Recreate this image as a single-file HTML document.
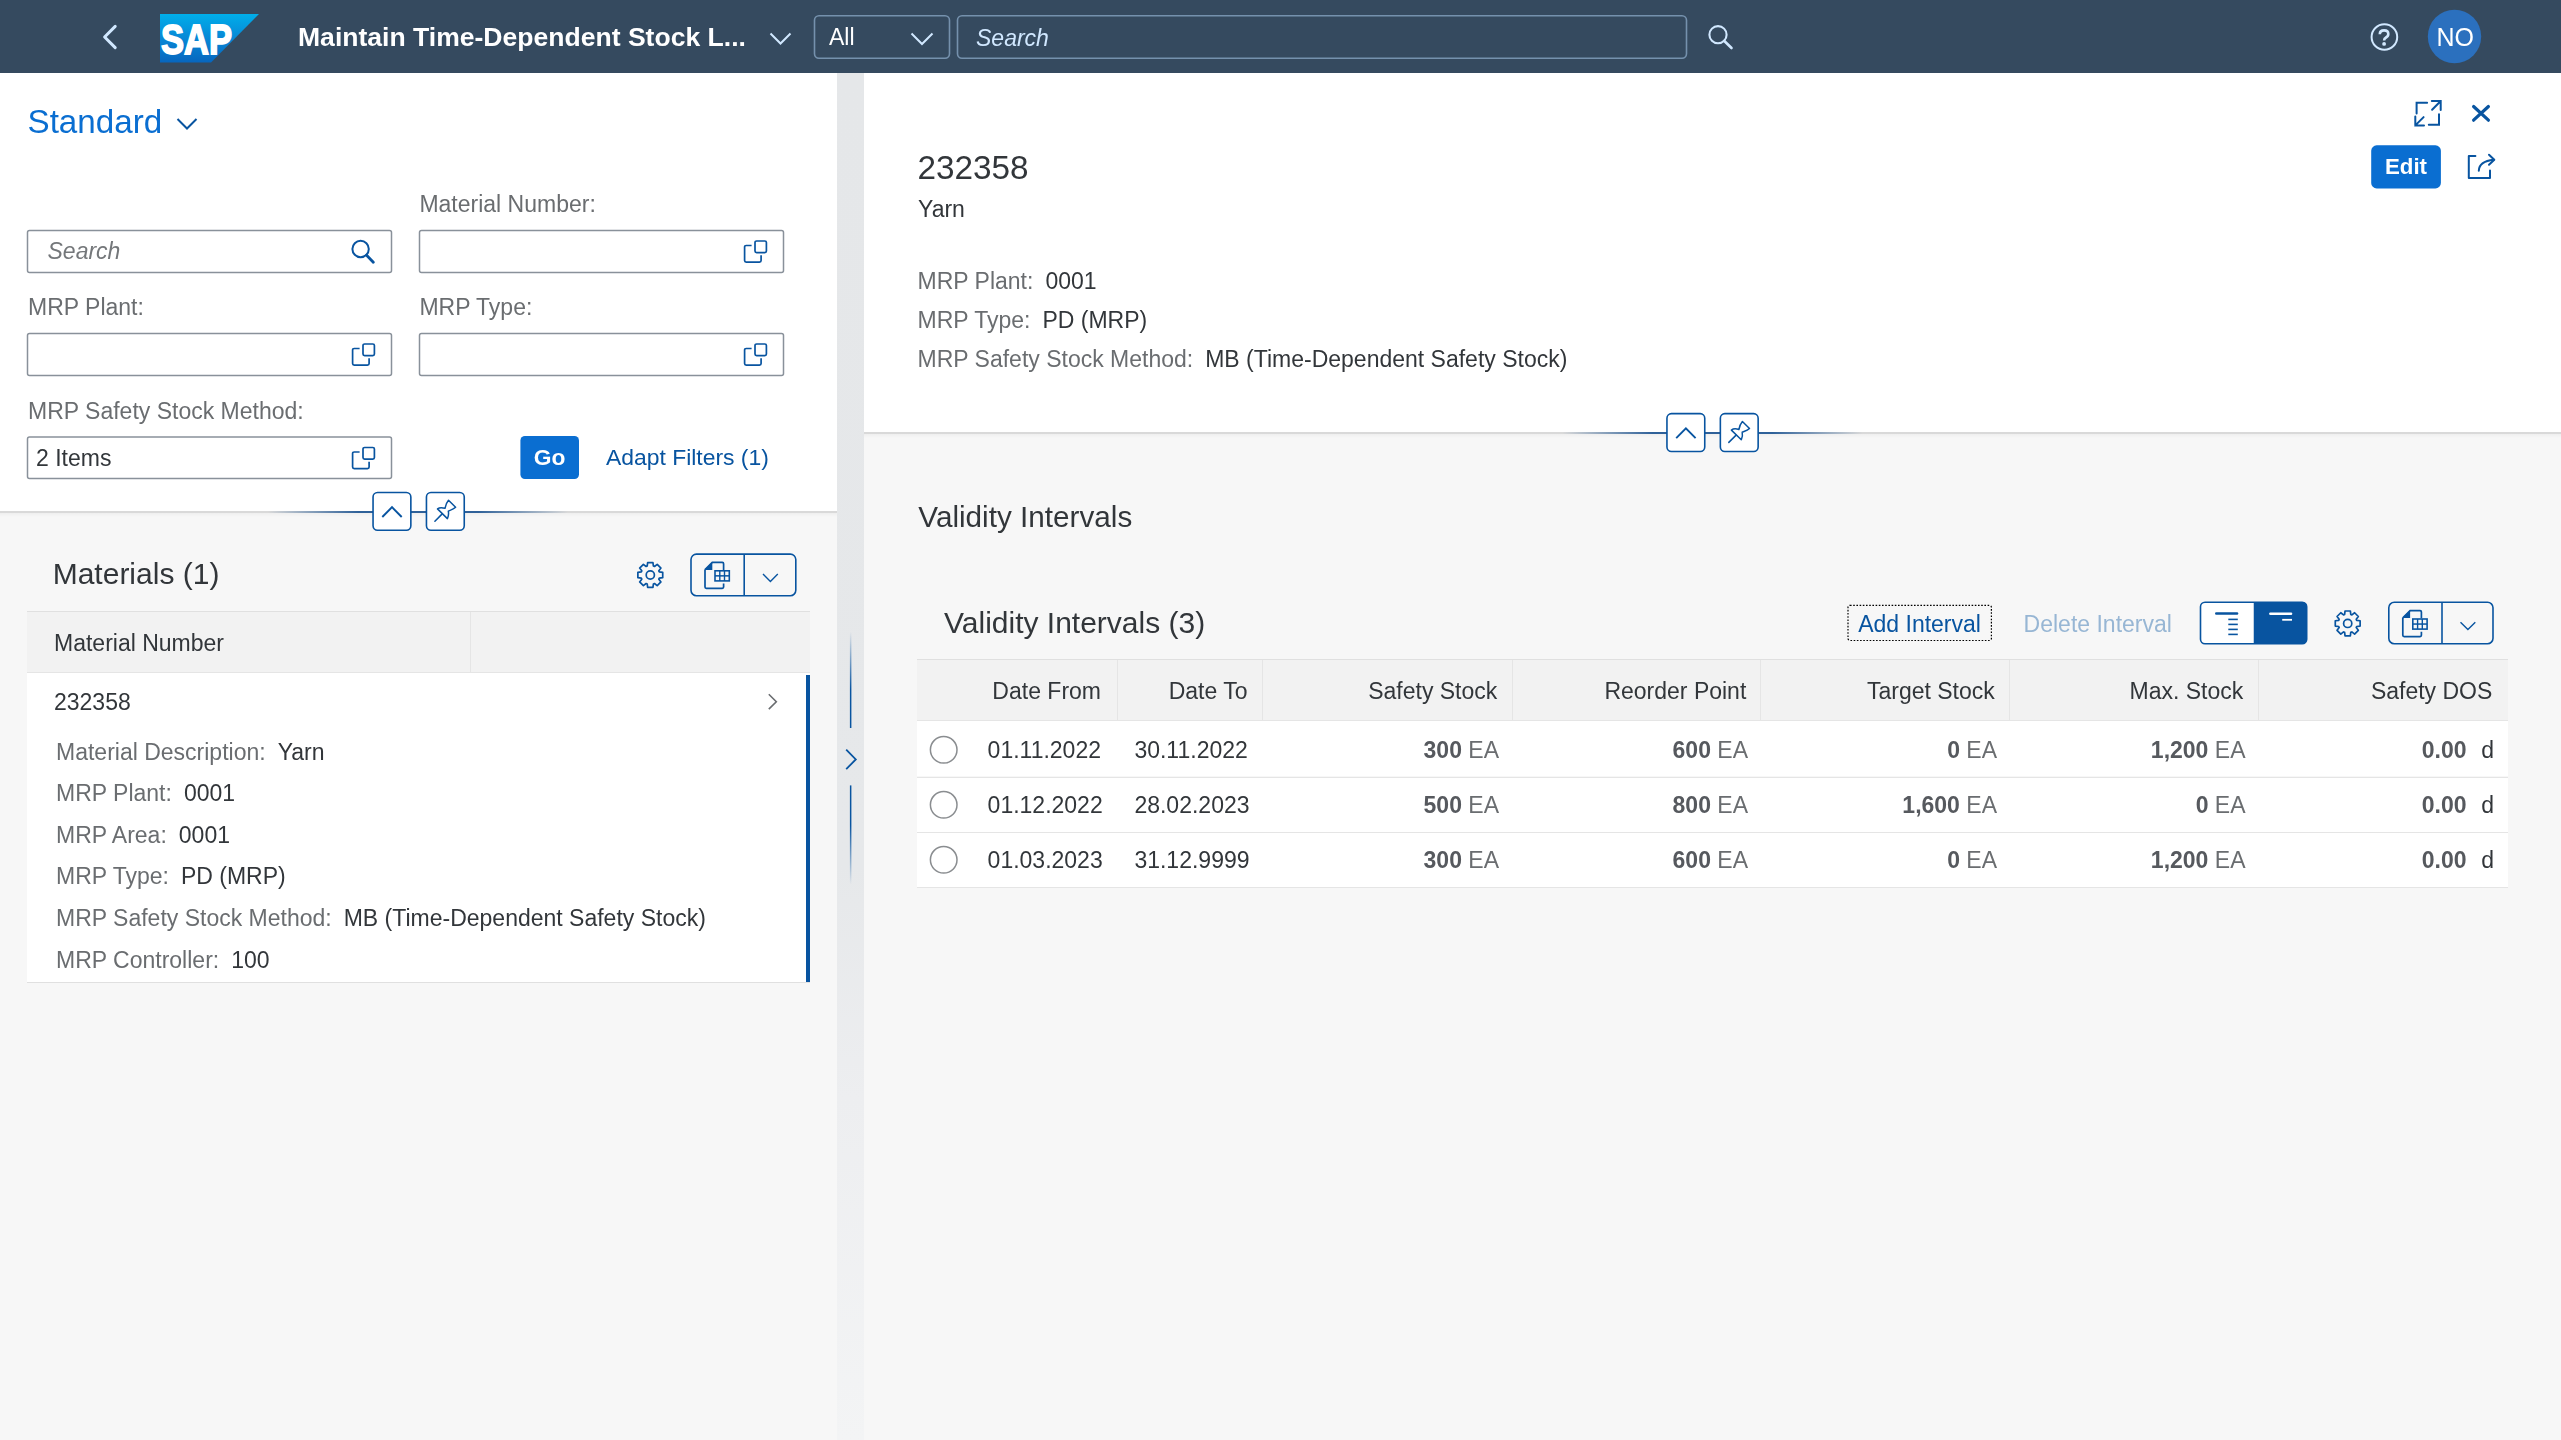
<!DOCTYPE html>
<html><head><meta charset="utf-8"><title>Maintain Time-Dependent Stock Levels</title>
<style>
html,body{margin:0;padding:0;width:2561px;height:1440px;overflow:hidden;background:#f7f7f7;font-family:"Liberation Sans", sans-serif;}
.t{position:absolute;white-space:nowrap;line-height:0;}
svg{position:absolute;left:0;top:0;}
</style></head><body>
<div style="position:absolute;left:0px;top:0px;width:2561px;height:73px;background:#354a5f"></div><div style="position:absolute;left:0px;top:73px;width:837px;height:438px;background:#fff"></div><div style="position:absolute;left:0px;top:511px;width:837px;height:2px;background:#d9d9d9"></div><div style="position:absolute;left:0px;top:513px;width:837px;height:4px;background:linear-gradient(rgba(0,0,0,0.035),rgba(0,0,0,0))"></div><div style="position:absolute;left:837px;top:73px;width:27px;height:1367px;background:linear-gradient(#e5e7e9 0%,#e6e8ea 58%,#edeef0 75%,#f3f4f5 100%)"></div><div style="position:absolute;left:864px;top:73px;width:1697px;height:360px;background:#fff"></div><div style="position:absolute;left:864px;top:432px;width:1697px;height:2px;background:#d9d9d9"></div><div style="position:absolute;left:864px;top:434px;width:1697px;height:4px;background:linear-gradient(rgba(0,0,0,0.035),rgba(0,0,0,0))"></div><div style="position:absolute;left:27px;top:611px;width:783px;height:1px;background:#e0e0e0"></div><div style="position:absolute;left:27px;top:612px;width:783px;height:61px;background:#f2f2f2"></div><div style="position:absolute;left:470px;top:612px;width:1px;height:61px;background:#e5e5e5"></div><div style="position:absolute;left:27px;top:672px;width:783px;height:1px;background:#e5e5e5"></div><div style="position:absolute;left:27px;top:673px;width:783px;height:309px;background:#fff"></div><div style="position:absolute;left:27px;top:982px;width:783px;height:1px;background:#e0e0e0"></div><div style="position:absolute;left:806px;top:675px;width:4px;height:307px;background:#0854a0"></div><div style="position:absolute;left:917px;top:659px;width:1591px;height:1px;background:#e0e0e0"></div><div style="position:absolute;left:917px;top:660px;width:1591px;height:61px;background:#f2f2f2"></div><div style="position:absolute;left:1116.5px;top:660px;width:1px;height:61px;background:#e5e5e5"></div><div style="position:absolute;left:1262px;top:660px;width:1px;height:61px;background:#e5e5e5"></div><div style="position:absolute;left:1511.5px;top:660px;width:1px;height:61px;background:#e5e5e5"></div><div style="position:absolute;left:1760px;top:660px;width:1px;height:61px;background:#e5e5e5"></div><div style="position:absolute;left:2009px;top:660px;width:1px;height:61px;background:#e5e5e5"></div><div style="position:absolute;left:2257.5px;top:660px;width:1px;height:61px;background:#e5e5e5"></div><div style="position:absolute;left:917px;top:720px;width:1591px;height:1px;background:#e5e5e5"></div><div style="position:absolute;left:917px;top:721px;width:1591px;height:55px;background:#fff"></div><div style="position:absolute;left:917px;top:777px;width:1591px;height:55px;background:#fff"></div><div style="position:absolute;left:917px;top:832px;width:1591px;height:55px;background:#fff"></div><div style="position:absolute;left:917px;top:777px;width:1591px;height:1px;background:#e5e5e5"></div><div style="position:absolute;left:917px;top:832px;width:1591px;height:1px;background:#e5e5e5"></div><div style="position:absolute;left:917px;top:887px;width:1591px;height:1px;background:#e5e5e5"></div>
<svg width="2561" height="1440" viewBox="0 0 2561 1440">
<polyline points="115.2,26.4 104.6,37 115.2,47.6" fill="none" stroke="#d1e8ff" stroke-width="3" stroke-linecap="round" stroke-linejoin="round"/><defs><linearGradient id="sapg" x1="0" y1="0" x2="0" y2="1"><stop offset="0" stop-color="#00aeea"/><stop offset="0.5" stop-color="#0888d6"/><stop offset="1" stop-color="#0766be"/></linearGradient></defs><polygon points="160,14 259,14 211,62.5 160,62.5" fill="url(#sapg)"/><text x="161" y="53.8" font-family="Liberation Sans" font-weight="700" font-size="42" fill="#fff" stroke="#fff" stroke-width="1.8" textLength="71" lengthAdjust="spacingAndGlyphs">SAP</text><polyline points="770.5,33.5 780.5,43.5 790.5,33.5" fill="none" stroke="#d1e8ff" stroke-width="2"/><rect x="814.5" y="15.75" width="135" height="42.5" rx="4.5" fill="none" stroke="#7591ad" stroke-width="1.6"/><polyline points="911.5,33.5 922,44 932.5,33.5" fill="none" stroke="#d1e8ff" stroke-width="2"/><rect x="957.5" y="15.75" width="729" height="42.5" rx="4.5" fill="none" stroke="#7591ad" stroke-width="1.6"/><circle cx="1718" cy="34.7" r="8.6" fill="none" stroke="#d1e8ff" stroke-width="2.1"/><line x1="1724.3" y1="41" x2="1731.5" y2="48" stroke="#d1e8ff" stroke-width="2.6" stroke-linecap="round"/><circle cx="2384.4" cy="37" r="12.8" fill="none" stroke="#d1e8ff" stroke-width="2"/><path d="M2379.8 34.2 Q2379.8 30.4 2384.1 30.4 Q2388.3 30.4 2388.3 34 Q2388.3 36.3 2386 37.5 Q2384.1 38.5 2384.1 40.6" fill="none" stroke="#d1e8ff" stroke-width="2.6" stroke-linecap="butt"/><circle cx="2384.1" cy="43.9" r="1.9" fill="#d1e8ff"/><circle cx="2454.5" cy="36.5" r="26.7" fill="#2b70be"/><polyline points="177.5,119 187,128.5 196.5,119" fill="none" stroke="#0854a0" stroke-width="2"/><rect x="27.5" y="230.5" width="364" height="42" rx="2" fill="#fff" stroke="#89919a" stroke-width="1.5"/><circle cx="360.6" cy="249" r="8.2" fill="none" stroke="#0854a0" stroke-width="2"/><line x1="366.6" y1="255.3" x2="373.3" y2="262.2" stroke="#0854a0" stroke-width="2.8" stroke-linecap="round"/><rect x="419.5" y="230.5" width="364" height="42" rx="2" fill="#fff" stroke="#89919a" stroke-width="1.5"/><g transform="translate(743.6,240)" fill="none" stroke="#0854a0" stroke-width="1.7"><rect x="11.4" y="1" width="11.4" height="11.6" rx="1.6"/><path d="M8 5.5 H2.6 Q1 5.5 1 7.1 V20.5 Q1 22.1 2.6 22.1 H15.9 Q17.5 22.1 17.5 20.5 V15.3"/></g><rect x="27.5" y="333.5" width="364" height="42" rx="2" fill="#fff" stroke="#89919a" stroke-width="1.5"/><g transform="translate(351.6,343)" fill="none" stroke="#0854a0" stroke-width="1.7"><rect x="11.4" y="1" width="11.4" height="11.6" rx="1.6"/><path d="M8 5.5 H2.6 Q1 5.5 1 7.1 V20.5 Q1 22.1 2.6 22.1 H15.9 Q17.5 22.1 17.5 20.5 V15.3"/></g><rect x="419.5" y="333.5" width="364" height="42" rx="2" fill="#fff" stroke="#89919a" stroke-width="1.5"/><g transform="translate(743.6,343)" fill="none" stroke="#0854a0" stroke-width="1.7"><rect x="11.4" y="1" width="11.4" height="11.6" rx="1.6"/><path d="M8 5.5 H2.6 Q1 5.5 1 7.1 V20.5 Q1 22.1 2.6 22.1 H15.9 Q17.5 22.1 17.5 20.5 V15.3"/></g><rect x="27.5" y="437.0" width="364" height="41.5" rx="2" fill="#fff" stroke="#89919a" stroke-width="1.5"/><g transform="translate(351.6,446.5)" fill="none" stroke="#0854a0" stroke-width="1.7"><rect x="11.4" y="1" width="11.4" height="11.6" rx="1.6"/><path d="M8 5.5 H2.6 Q1 5.5 1 7.1 V20.5 Q1 22.1 2.6 22.1 H15.9 Q17.5 22.1 17.5 20.5 V15.3"/></g><rect x="520.4" y="436" width="58.6" height="43" rx="4.5" fill="#0a6ed1"/><defs><linearGradient id="cl418" x1="0" x2="1" y1="0" y2="0"><stop offset="0" stop-color="#2f6199" stop-opacity="0"/><stop offset="0.3" stop-color="#2f6199" stop-opacity="1"/><stop offset="0.7" stop-color="#2f6199" stop-opacity="1"/><stop offset="1" stop-color="#2f6199" stop-opacity="0"/></linearGradient></defs><rect x="268" y="511" width="300" height="2" fill="url(#cl418)"/><rect x="373.05" y="492.45" width="37.8" height="37.8" rx="4.5" fill="#fff" stroke="#0854a0" stroke-width="1.6"/><polyline points="382.3,517.0 392.0,507.2 401.7,517.0" fill="none" stroke="#0854a0" stroke-width="1.9"/><rect x="426.45" y="492.45" width="37.8" height="37.8" rx="4.5" fill="#fff" stroke="#0854a0" stroke-width="1.6"/><g transform="translate(425.7,491.7)" fill="none" stroke="#0854a0" stroke-width="1.5" stroke-linejoin="round" stroke-linecap="round"><path d="M9.2 29.5 L16.5 22.2"/><path d="M11.8 17.2 C13.8 15.6 16.8 15.8 19.3 16.6 C19.9 13.6 21 10.6 22.8 8.6 L29.9 15.6 C28 17.4 25 18.4 22.6 19.4 C23.2 22 22.6 24.8 21.7 26.9 Z"/></g><polygon points="659.29,571.92 662.72,572.35 662.72,577.65 659.29,578.08 658.83,579.18 660.95,581.91 657.21,585.65 654.48,583.53 653.38,583.99 652.95,587.42 647.65,587.42 647.22,583.99 646.12,583.53 643.39,585.65 639.65,581.91 641.77,579.18 641.31,578.08 637.88,577.65 637.88,572.35 641.31,571.92 641.77,570.82 639.65,568.09 643.39,564.35 646.12,566.47 647.22,566.01 647.65,562.58 652.95,562.58 653.38,566.01 654.48,566.47 657.21,564.35 660.95,568.09 658.83,570.82" fill="none" stroke="#0854a0" stroke-width="1.7" stroke-linejoin="round"/><circle cx="650.3" cy="575" r="4.1" fill="none" stroke="#0854a0" stroke-width="1.7"/><rect x="691.0" y="554.0999999999999" width="104.79999999999998" height="41.70000000000007" rx="5.5" fill="none" stroke="#0854a0" stroke-width="1.6"/><line x1="744.2" y1="554.3" x2="744.2" y2="595.6" stroke="#0854a0" stroke-width="1.6"/><g transform="translate(704.0,561.5999999999999)"><path d="M1 8 V25.5 Q1 26.8 2.3 26.8 H18.3 Q19.6 26.8 19.6 25.5 V22" fill="none" stroke="#0854a0" stroke-width="1.7"/><path d="M1 8 L8.3 0.8 H18.3 Q19.6 0.8 19.6 2.1 V8.5" fill="none" stroke="#0854a0" stroke-width="1.7"/><path d="M0.5 8.3 L8.3 0.4 V8.3 Z" fill="#0854a0"/><rect x="10.2" y="8.4" width="15.9" height="11.7" fill="#0854a0"/><rect x="11.8" y="10" width="3.3" height="3.5" fill="#f7f7f7"/><rect x="16.5" y="10" width="3.3" height="3.5" fill="#f7f7f7"/><rect x="21.2" y="10" width="3.3" height="3.5" fill="#f7f7f7"/><rect x="11.8" y="15" width="3.3" height="3.5" fill="#f7f7f7"/><rect x="16.5" y="15" width="3.3" height="3.5" fill="#f7f7f7"/><rect x="21.2" y="15" width="3.3" height="3.5" fill="#f7f7f7"/></g><polyline points="763.0000000000001,574.05 770.4000000000001,581.45 777.8000000000001,574.05" fill="none" stroke="#0854a0" stroke-width="1.4"/><polyline points="768.8,694.3 776.3,701.7 768.8,709.1" fill="none" stroke="#6a6d70" stroke-width="1.6"/><defs><linearGradient id="dvu" x1="0" x2="0" y1="0" y2="1"><stop offset="0" stop-color="#0854a0" stop-opacity="0"/><stop offset="0.6" stop-color="#0854a0" stop-opacity="1"/></linearGradient><linearGradient id="dvd" x1="0" x2="0" y1="0" y2="1"><stop offset="0.4" stop-color="#0854a0" stop-opacity="1"/><stop offset="1" stop-color="#0854a0" stop-opacity="0"/></linearGradient></defs><rect x="849.9" y="631.7" width="1.5" height="96.3" fill="url(#dvu)"/><rect x="849.9" y="785.4" width="1.5" height="99.2" fill="url(#dvd)"/><polyline points="846.2,749.6 855.8,759.4 846.2,769.2" fill="none" stroke="#0854a0" stroke-width="1.8"/><g transform="translate(2414.3,99.8)" fill="none" stroke="#0854a0" stroke-width="2" stroke-linecap="round"><path d="M12.8 2.9 H2.3 V13.6"/><path d="M17.8 10 L26.2 1.4 M17.5 1.2 H26.4 V10.3"/><path d="M24.7 14.4 V25 H14.5"/><path d="M9.3 17.3 L1 25.6 M1 16.8 V25.8 H9.7"/></g><path d="M2473.6 106.5 L2488.4 120.2 M2488.4 106.5 L2473.6 120.2" stroke="#0854a0" stroke-width="3.2" stroke-linecap="round"/><rect x="2371.2" y="145.3" width="69.7" height="43.1" rx="5.5" fill="#0a6ed1"/><g transform="translate(2467.8,153.7)" fill="none" stroke="#0854a0" stroke-width="2" stroke-linecap="round" stroke-linejoin="round"><path d="M7.6 2.2 H1 V24.3 H22.2 V16.8"/><path d="M11 17 Q11.3 7.5 26 6"/><path d="M21.2 1 L26.5 6.1 L21.2 11"/></g><defs><linearGradient id="cl1712" x1="0" x2="1" y1="0" y2="0"><stop offset="0" stop-color="#2f6199" stop-opacity="0"/><stop offset="0.3" stop-color="#2f6199" stop-opacity="1"/><stop offset="0.7" stop-color="#2f6199" stop-opacity="1"/><stop offset="1" stop-color="#2f6199" stop-opacity="0"/></linearGradient></defs><rect x="1562.5" y="432" width="300" height="2" fill="url(#cl1712)"/><rect x="1666.95" y="413.65" width="37.8" height="37.8" rx="4.5" fill="#fff" stroke="#0854a0" stroke-width="1.6"/><polyline points="1676.2,438.2 1685.9,428.4 1695.6000000000001,438.2" fill="none" stroke="#0854a0" stroke-width="1.9"/><rect x="1720.3500000000001" y="413.65" width="37.8" height="37.8" rx="4.5" fill="#fff" stroke="#0854a0" stroke-width="1.6"/><g transform="translate(1719.6000000000001,412.9)" fill="none" stroke="#0854a0" stroke-width="1.5" stroke-linejoin="round" stroke-linecap="round"><path d="M9.2 29.5 L16.5 22.2"/><path d="M11.8 17.2 C13.8 15.6 16.8 15.8 19.3 16.6 C19.9 13.6 21 10.6 22.8 8.6 L29.9 15.6 C28 17.4 25 18.4 22.6 19.4 C23.2 22 22.6 24.8 21.7 26.9 Z"/></g><rect x="1848" y="605.3" width="143.4" height="35.2" rx="2" fill="none" stroke="#000" stroke-width="1.2" stroke-dasharray="1.6,1.6"/><path d="M2253.5 602.3 H2303 Q2306.7 602.3 2306.7 606 V640 Q2306.7 643.8 2303 643.8 H2253.5 Z" fill="#0854a0"/><path d="M2253.5 602.3 H2205 Q2200.5 602.3 2200.5 606.8 V639.3 Q2200.5 643.8 2205 643.8 H2253.5 Z" fill="#fff"/><rect x="2200.5" y="602.3" width="106.2" height="41.5" rx="4.5" fill="none" stroke="#0854a0" stroke-width="1.6"/><path d="M2216.3 613.5 H2237" stroke="#0854a0" stroke-width="2.6" stroke-linecap="round"/><path d="M2228.3 619.4 H2237.8" stroke="#0854a0" stroke-width="1.6"/><path d="M2228.3 624.4 H2237.8" stroke="#0854a0" stroke-width="1.6"/><path d="M2228.3 629.4 H2237.8" stroke="#0854a0" stroke-width="1.6"/><path d="M2228.3 634.4 H2237.8" stroke="#0854a0" stroke-width="1.6"/><path d="M2270.4 613.7 H2291" stroke="#fff" stroke-width="2.6" stroke-linecap="round"/><path d="M2282.2 619.8 H2292" stroke="#fff" stroke-width="1.8"/><polygon points="2356.69,620.32 2360.12,620.75 2360.12,626.05 2356.69,626.48 2356.23,627.58 2358.35,630.31 2354.61,634.05 2351.88,631.93 2350.78,632.39 2350.35,635.82 2345.05,635.82 2344.62,632.39 2343.52,631.93 2340.79,634.05 2337.05,630.31 2339.17,627.58 2338.71,626.48 2335.28,626.05 2335.28,620.75 2338.71,620.32 2339.17,619.22 2337.05,616.49 2340.79,612.75 2343.52,614.87 2344.62,614.41 2345.05,610.98 2350.35,610.98 2350.78,614.41 2351.88,614.87 2354.61,612.75 2358.35,616.49 2356.23,619.22" fill="none" stroke="#0854a0" stroke-width="1.7" stroke-linejoin="round"/><circle cx="2347.7" cy="623.4" r="4.1" fill="none" stroke="#0854a0" stroke-width="1.7"/><rect x="2388.8" y="602.3" width="104.20000000000019" height="41.50000000000002" rx="5.5" fill="none" stroke="#0854a0" stroke-width="1.6"/><line x1="2442" y1="602.5" x2="2442" y2="643.6" stroke="#0854a0" stroke-width="1.6"/><g transform="translate(2401.8,609.8)"><path d="M1 8 V25.5 Q1 26.8 2.3 26.8 H18.3 Q19.6 26.8 19.6 25.5 V22" fill="none" stroke="#0854a0" stroke-width="1.7"/><path d="M1 8 L8.3 0.8 H18.3 Q19.6 0.8 19.6 2.1 V8.5" fill="none" stroke="#0854a0" stroke-width="1.7"/><path d="M0.5 8.3 L8.3 0.4 V8.3 Z" fill="#0854a0"/><rect x="10.2" y="8.4" width="15.9" height="11.7" fill="#0854a0"/><rect x="11.8" y="10" width="3.3" height="3.5" fill="#f7f7f7"/><rect x="16.5" y="10" width="3.3" height="3.5" fill="#f7f7f7"/><rect x="21.2" y="10" width="3.3" height="3.5" fill="#f7f7f7"/><rect x="11.8" y="15" width="3.3" height="3.5" fill="#f7f7f7"/><rect x="16.5" y="15" width="3.3" height="3.5" fill="#f7f7f7"/><rect x="21.2" y="15" width="3.3" height="3.5" fill="#f7f7f7"/></g><polyline points="2460.5,622.1499999999999 2467.9,629.55 2475.3,622.1499999999999" fill="none" stroke="#0854a0" stroke-width="1.4"/><circle cx="943.7" cy="749.8" r="13.3" fill="#fff" stroke="#8a8d90" stroke-width="1.5"/><circle cx="943.7" cy="804.8" r="13.3" fill="#fff" stroke="#8a8d90" stroke-width="1.5"/><circle cx="943.7" cy="859.8" r="13.3" fill="#fff" stroke="#8a8d90" stroke-width="1.5"/>
</svg>
<div id="tx" style="position:absolute;left:0;top:0;width:2561px;height:1440px;will-change:transform"><div class="t" style="left:298.00px;top:36.80px;font-size:26.55px;color:#fff;font-weight:700;font-style:normal;">Maintain Time-Dependent Stock L...</div><div class="t" style="left:829.00px;top:37.23px;font-size:23px;color:#fff;font-weight:400;font-style:normal;">All</div><div class="t" style="left:976.00px;top:37.83px;font-size:23px;color:#d1e8ff;font-weight:400;font-style:italic;">Search</div><div class="t" style="left:2436.50px;top:37.24px;font-size:25px;color:#fff;font-weight:400;font-style:normal;">NO</div><div class="t" style="left:27.50px;top:121.80px;font-size:33.2px;color:#0a6ed1;font-weight:400;font-style:normal;">Standard</div><div class="t" style="left:419.40px;top:204.03px;font-size:23px;color:#6a6d70;font-weight:400;font-style:normal;">Material Number:</div><div class="t" style="left:47.50px;top:250.83px;font-size:23px;color:#74777a;font-weight:400;font-style:italic;">Search</div><div class="t" style="left:28.00px;top:306.83px;font-size:23px;color:#6a6d70;font-weight:400;font-style:normal;">MRP Plant:</div><div class="t" style="left:419.40px;top:306.83px;font-size:23px;color:#6a6d70;font-weight:400;font-style:normal;">MRP Type:</div><div class="t" style="left:28.00px;top:410.73px;font-size:23px;color:#6a6d70;font-weight:400;font-style:normal;">MRP Safety Stock Method:</div><div class="t" style="left:36.00px;top:458.23px;font-size:23px;color:#32363a;font-weight:400;font-style:normal;">2 Items</div><div class="t" style="left:549.70px;top:457.10px;font-size:22.8px;color:#fff;font-weight:700;font-style:normal;transform:translateX(-50%)">Go</div><div class="t" style="left:606.00px;top:457.07px;font-size:22.9px;color:#0854a0;font-weight:400;font-style:normal;">Adapt Filters (1)</div><div class="t" style="left:52.70px;top:573.90px;font-size:30px;color:#32363a;font-weight:400;font-style:normal;">Materials (1)</div><div class="t" style="left:54.00px;top:642.73px;font-size:23px;color:#32363a;font-weight:400;font-style:normal;">Material Number</div><div class="t" style="left:54.00px;top:701.73px;font-size:23px;color:#32363a;font-weight:400;font-style:normal;">232358</div><div class="t" style="left:56px;top:751.93px;font-size:23px;color:#6a6d70">Material Description:<span style="color:#32363a;margin-left:12px">Yarn</span></div><div class="t" style="left:56px;top:792.73px;font-size:23px;color:#6a6d70">MRP Plant:<span style="color:#32363a;margin-left:12px">0001</span></div><div class="t" style="left:56px;top:834.93px;font-size:23px;color:#6a6d70">MRP Area:<span style="color:#32363a;margin-left:12px">0001</span></div><div class="t" style="left:56px;top:876.33px;font-size:23px;color:#6a6d70">MRP Type:<span style="color:#32363a;margin-left:12px">PD (MRP)</span></div><div class="t" style="left:56px;top:918.13px;font-size:23px;color:#6a6d70">MRP Safety Stock Method:<span style="color:#32363a;margin-left:12px">MB (Time-Dependent Safety Stock)</span></div><div class="t" style="left:56px;top:959.63px;font-size:23px;color:#6a6d70">MRP Controller:<span style="color:#32363a;margin-left:12px">100</span></div><div class="t" style="left:917.50px;top:168.16px;font-size:33.3px;color:#32363a;font-weight:400;font-style:normal;">232358</div><div class="t" style="left:918.00px;top:209.03px;font-size:23px;color:#32363a;font-weight:400;font-style:normal;">Yarn</div><div class="t" style="left:917.5px;top:281.03px;font-size:23px;color:#6a6d70">MRP Plant:<span style="color:#32363a;margin-left:12px">0001</span></div><div class="t" style="left:917.5px;top:319.83px;font-size:23px;color:#6a6d70">MRP Type:<span style="color:#32363a;margin-left:12px">PD (MRP)</span></div><div class="t" style="left:917.5px;top:359.03px;font-size:23px;color:#6a6d70">MRP Safety Stock Method:<span style="color:#32363a;margin-left:12px">MB (Time-Dependent Safety Stock)</span></div><div class="t" style="left:2406.00px;top:167.17px;font-size:22.3px;color:#fff;font-weight:700;font-style:normal;transform:translateX(-50%)">Edit</div><div class="t" style="left:918.30px;top:517.21px;font-size:29.7px;color:#32363a;font-weight:400;font-style:normal;">Validity Intervals</div><div class="t" style="left:944.00px;top:622.90px;font-size:30px;color:#32363a;font-weight:400;font-style:normal;">Validity Intervals (3)</div><div class="t" style="left:1858.20px;top:623.63px;font-size:23px;color:#0854a0;font-weight:400;font-style:normal;">Add Interval</div><div class="t" style="left:2023.60px;top:623.63px;font-size:23px;color:#97b6d4;font-weight:400;font-style:normal;">Delete Interval</div><div class="t" style="right:1460.00px;top:691.23px;font-size:23px;color:#32363a;font-weight:400;font-style:normal;">Date From</div><div class="t" style="right:1313.50px;top:691.23px;font-size:23px;color:#32363a;font-weight:400;font-style:normal;">Date To</div><div class="t" style="right:1063.70px;top:691.23px;font-size:23px;color:#32363a;font-weight:400;font-style:normal;">Safety Stock</div><div class="t" style="right:814.70px;top:691.23px;font-size:23px;color:#32363a;font-weight:400;font-style:normal;">Reorder Point</div><div class="t" style="right:566.20px;top:691.23px;font-size:23px;color:#32363a;font-weight:400;font-style:normal;">Target Stock</div><div class="t" style="right:317.70px;top:691.23px;font-size:23px;color:#32363a;font-weight:400;font-style:normal;">Max. Stock</div><div class="t" style="right:68.70px;top:691.23px;font-size:23px;color:#32363a;font-weight:400;font-style:normal;">Safety DOS</div><div class="t" style="left:987.60px;top:750.43px;font-size:23px;color:#32363a;font-weight:400;font-style:normal;">01.11.2022</div><div class="t" style="left:1134.40px;top:750.43px;font-size:23px;color:#32363a;font-weight:400;font-style:normal;">30.11.2022</div><div class="t" style="right:1062.00px;top:750.43px;font-size:23px;color:#6a6d70"><b style="color:#56595e">300</b>&nbsp;EA</div><div class="t" style="right:813.00px;top:750.43px;font-size:23px;color:#6a6d70"><b style="color:#56595e">600</b>&nbsp;EA</div><div class="t" style="right:564.00px;top:750.43px;font-size:23px;color:#6a6d70"><b style="color:#56595e">0</b>&nbsp;EA</div><div class="t" style="right:315.50px;top:750.43px;font-size:23px;color:#6a6d70"><b style="color:#56595e">1,200</b>&nbsp;EA</div><div class="t" style="right:94.50px;top:750.43px;font-size:23px;color:#56595e;font-weight:700;font-style:normal;">0.00</div><div class="t" style="right:67.00px;top:750.43px;font-size:23px;color:#32363a;font-weight:400;font-style:normal;">d</div><div class="t" style="left:987.60px;top:805.43px;font-size:23px;color:#32363a;font-weight:400;font-style:normal;">01.12.2022</div><div class="t" style="left:1134.40px;top:805.43px;font-size:23px;color:#32363a;font-weight:400;font-style:normal;">28.02.2023</div><div class="t" style="right:1062.00px;top:805.43px;font-size:23px;color:#6a6d70"><b style="color:#56595e">500</b>&nbsp;EA</div><div class="t" style="right:813.00px;top:805.43px;font-size:23px;color:#6a6d70"><b style="color:#56595e">800</b>&nbsp;EA</div><div class="t" style="right:564.00px;top:805.43px;font-size:23px;color:#6a6d70"><b style="color:#56595e">1,600</b>&nbsp;EA</div><div class="t" style="right:315.50px;top:805.43px;font-size:23px;color:#6a6d70"><b style="color:#56595e">0</b>&nbsp;EA</div><div class="t" style="right:94.50px;top:805.43px;font-size:23px;color:#56595e;font-weight:700;font-style:normal;">0.00</div><div class="t" style="right:67.00px;top:805.43px;font-size:23px;color:#32363a;font-weight:400;font-style:normal;">d</div><div class="t" style="left:987.60px;top:860.43px;font-size:23px;color:#32363a;font-weight:400;font-style:normal;">01.03.2023</div><div class="t" style="left:1134.40px;top:860.43px;font-size:23px;color:#32363a;font-weight:400;font-style:normal;">31.12.9999</div><div class="t" style="right:1062.00px;top:860.43px;font-size:23px;color:#6a6d70"><b style="color:#56595e">300</b>&nbsp;EA</div><div class="t" style="right:813.00px;top:860.43px;font-size:23px;color:#6a6d70"><b style="color:#56595e">600</b>&nbsp;EA</div><div class="t" style="right:564.00px;top:860.43px;font-size:23px;color:#6a6d70"><b style="color:#56595e">0</b>&nbsp;EA</div><div class="t" style="right:315.50px;top:860.43px;font-size:23px;color:#6a6d70"><b style="color:#56595e">1,200</b>&nbsp;EA</div><div class="t" style="right:94.50px;top:860.43px;font-size:23px;color:#56595e;font-weight:700;font-style:normal;">0.00</div><div class="t" style="right:67.00px;top:860.43px;font-size:23px;color:#32363a;font-weight:400;font-style:normal;">d</div></div>
</body></html>
